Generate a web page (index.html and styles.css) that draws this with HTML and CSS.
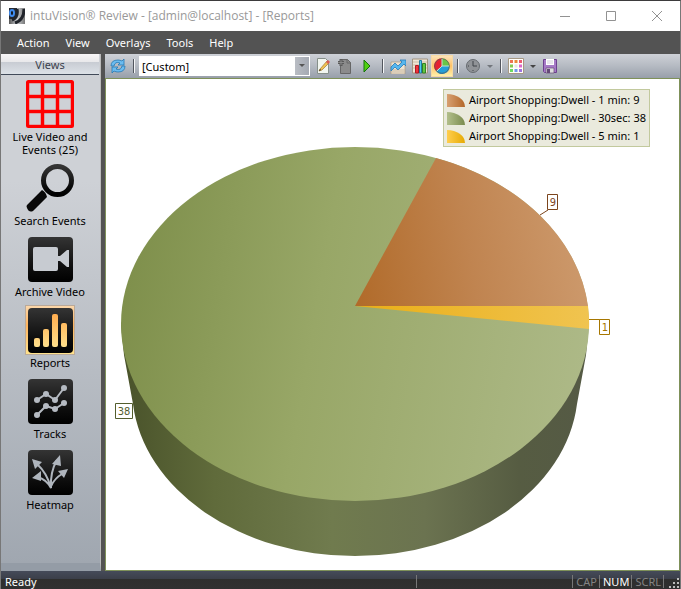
FILE: index.html
```
<!DOCTYPE html>
<html lang="en">
<head>
<meta charset="utf-8">
<title>intuVision Review</title>
<link rel="stylesheet" href="styles.css">
</head>
<body>
<div class="window">
  <header class="titlebar">
    <svg class="app-icon" viewBox="0 0 16 16" aria-hidden="true">
      <defs><linearGradient id="app" x1="0" x2="1"><stop offset="0" stop-color="#555"/><stop offset=".5" stop-color="#c9ccd0"/><stop offset="1" stop-color="#777"/></linearGradient></defs>
      <rect width="16" height="16" fill="url(#app)"/>
      <path d="M0 0h8v5L5 11H0z" fill="#252a33"/>
      <path d="M15 1c0 8-3 12-9 14M8 1c1 5 0 9-5 11" fill="none" stroke="#20242b" stroke-width="3"/>
      <ellipse cx="3" cy="5" rx="2" ry="3" fill="#111" stroke="#3f8cf0" stroke-width="2"/>
    </svg>
    <h1 class="title">intuVision® Review - [admin@localhost] - [Reports]</h1>
    <button class="caption" aria-label="Minimize"><svg viewBox="0 0 12 12"><path d="M1 6.500h10"/></svg></button>
    <button class="caption" aria-label="Maximize"><svg viewBox="0 0 12 12"><path d="M1.500 1.500h9v9h-9z"/></svg></button>
    <button class="caption" aria-label="Close"><svg viewBox="0 0 12 12"><path d="M1 1l10 10M11 1L1 11"/></svg></button>
  </header>
  <nav class="menubar">
    <button>Action</button><button>View</button><button>Overlays</button><button>Tools</button><button>Help</button>
  </nav>
  <div class="body">
    <aside class="sidebar">
      <h2 class="views">Views</h2>
      <svg class="defs" aria-hidden="true">
        <defs>
          <linearGradient id="dark" x2="0" y2="1"><stop offset="0" stop-color="#343434"/><stop offset=".7" stop-color="#0c0c0c"/><stop offset="1" stop-color="#000"/></linearGradient>
          <linearGradient id="amber" gradientUnits="userSpaceOnUse" x1="0" y1="8" x2="0" y2="42"><stop offset="0" stop-color="#ffab4d"/><stop offset="1" stop-color="#ffe08c"/></linearGradient>
        </defs>
      </svg>
      <button class="view">
        <svg viewBox="0 0 50 50"><rect x="2.500" y="2.500" width="45" height="45" rx="1" fill="none" stroke="red" stroke-width="3"/><path d="M17.500 2v46M32.500 2v46M2 17.500h46M2 32.500h46" stroke="red" stroke-width="3"/><path d="M4 4h12v12H4zM19 4h12v12H19zM34 4h12v12H34zM4 19h12v12H4zM19 19h12v12H19zM34 19h12v12H34zM4 34h12v12H4zM19 34h12v12H19zM34 34h12v12H34z" fill="none" stroke="red" stroke-width="1" stroke-opacity=".45"/></svg>
        <span>Live Video and Events (25)</span>
      </button>
      <button class="view">
        <svg viewBox="0 0 50 50"><circle cx="32.500" cy="17.500" r="14" fill="none" stroke="url(#dark)" stroke-width="5"/><path d="M17 27q4 2 5 7L8 48q-4 2-6-3-1-2 0-3z" fill="#090909"/></svg>
        <span>Search Events</span>
      </button>
      <button class="view">
        <svg viewBox="0 0 50 50"><rect x="3" y="3" width="45" height="45" rx="4" fill="url(#dark)"/><path d="M10 13h21q2 0 2 2v7h2l7-6h2v17h-2l-7-6h-2v8q0 2-2 2H10q-2 0-2-2V15q0-2 2-2z" fill="#c7cbd1"/></svg>
        <span>Archive Video</span>
      </button>
      <button class="view selected">
        <svg viewBox="0 0 50 50"><rect x="3" y="3" width="45" height="45" rx="4" fill="url(#dark)"/><g fill="url(#amber)"><rect x="9" y="33" width="6" height="9" rx="2"/><rect x="18" y="24" width="6" height="18" rx="2"/><rect x="27" y="9" width="6" height="33" rx="2"/><rect x="36" y="18" width="6" height="24" rx="2"/></g></svg>
        <span>Reports</span>
      </button>
      <button class="view">
        <svg viewBox="0 0 50 50"><rect x="3" y="3" width="45" height="45" rx="4" fill="url(#dark)"/><g fill="none" stroke="#b5bac2" stroke-width="2"><path d="M12 24l9-6 9 6 9-12M12 39l9-9 9 3 9-6"/></g><g fill="#b5bac2"><circle cx="12" cy="24" r="3"/><circle cx="21" cy="18" r="3"/><circle cx="30" cy="24" r="3"/><circle cx="39" cy="12" r="3"/><circle cx="12" cy="39" r="3"/><circle cx="21" cy="30" r="3"/><circle cx="30" cy="33" r="3"/><circle cx="39" cy="27" r="3"/></g></svg>
        <span>Tracks</span>
      </button>
      <button class="view">
        <svg viewBox="0 0 50 50"><rect x="3" y="3" width="45" height="45" rx="4" fill="url(#dark)"/><path d="M26 41Q22 26 12 17M26 41Q25 25 32 13M26 41q-4-8-13-11M26 39q4-8 11-12" fill="none" stroke="#afb5bd" stroke-width="2"/><path d="M7 12l10 3-7 7zM35 8l-8 9 9 2zM43 22l-10 2 6 7zM7 31l9-7v10zM23 36h5l-2 6z" fill="#afb5bd"/></svg>
        <span>Heatmap</span>
      </button>
    </aside>
    <main class="main">
      <div class="toolbar">
        <button class="tool" aria-label="Refresh"><svg viewBox="0 0 16 16"><path d="M1 8q0-6 7-6 2 0 4 1l2-2v6H8l2-2Q5 3 4 8z" fill="#6cbcf0" stroke="#2478b4" stroke-width=".8"/><path d="M15 8q0 6-7 6-2 0-4-1l-2 2V9h6l-2 2q5 2 6-3z" fill="#6cbcf0" stroke="#2478b4" stroke-width=".8"/></svg></button>
        <span class="sep"></span>
        <span class="combo"><select aria-label="Report"><option>[Custom]</option></select></span>
        <button class="tool" aria-label="Edit"><svg viewBox="0 0 16 16"><path d="M2.500.500h8l3 3v12h-11z" fill="#f2f6f0" stroke="#86908a"/><path d="M5 11l7-8 2 2-7 7-3 1z" fill="#efc252" stroke="#a17a38" stroke-width=".7"/><path d="M11 4l2-2 2 2-2 2z" fill="#d95b55"/><path d="M4 13l1-2 1 1z" fill="#222"/></svg></button>
        <button class="tool" aria-label="Add"><svg viewBox="0 0 16 16"><path d="M3.500 1.500h7l3 3v11h-10z" fill="#8b8b8b" stroke="#666"/><path d="M4 1v7M1 4.500h6" stroke="#5a5a5a" stroke-width="3"/><path d="M4 2v5M1 4.500h6" stroke="#8a8a8a"/><path d="M10 1v4h4" fill="none" stroke="#666"/></svg></button>
        <button class="tool" aria-label="Run"><svg viewBox="0 0 16 16"><path d="M5 2l6 6-6 6z" fill="#4fd010" stroke="#15720b"/></svg></button>
        <span class="sep"></span>
        <button class="tool" aria-label="Line chart"><svg viewBox="0 0 16 16"><path d="M1 4h14v12H1z" fill="#eee2d0" stroke="#a99880" stroke-width=".7"/><path d="M1 12h14M1 14h14" stroke="#c8b9a0"/><path d="M1 9l4-4 3 3 4-4-2-2h6v6l-2-2-6 6-3-3-4 4z" fill="#55b7ef" stroke="#2878b4" stroke-width=".8"/></svg></button>
        <button class="tool" aria-label="Bar chart"><svg viewBox="0 0 16 16"><path d="M.500 1h15v14H.500z" fill="#eee5d5" stroke="#a39580"/><path d="M1 4h14M1 7h14M1 10h14" stroke="#cbbda7"/><path d="M3.500 7.500h3V15h-3z" fill="#ed343b" stroke="#b21823"/><path d="M7.500 2.500h2V15h-2z" fill="#52cceb" stroke="#217da2"/><path d="M10.500 5.500h3V15h-3z" fill="#61c744" stroke="#348123"/></svg></button>
        <button class="tool active" aria-label="Pie chart"><svg viewBox="0 0 16 16"><path d="M8 8V.500A7.500 7.500 0 0 0 2 13z" fill="#e52131"/><path d="M8 8V.500A7.500 7.500 0 0 1 15.500 8z" fill="#6ac447"/><path d="M8 8h7.500A7.500 7.500 0 0 1 2 13z" fill="#249ed8"/><circle cx="8" cy="8" r="7.300" fill="none" stroke="#555" stroke-opacity=".7"/><path d="M8 8V1M8 8h7M8 8l-5 5" stroke="#bce3d0"/></svg></button>
        <span class="sep"></span>
        <button class="tool drop muted" aria-label="Time"><svg viewBox="0 0 16 16"><circle cx="8" cy="8" r="6.500" fill="#909397" stroke="#666b70"/><path d="M8 3v5h4M3 8h1M8 12v1" fill="none" stroke="#3e4348"/></svg></button>
        <span class="sep"></span>
        <button class="tool drop" aria-label="Colors"><svg viewBox="0 0 16 16"><path d="M.500.500h15v15H.500z" fill="#fffefa" stroke="#a69984"/><path fill="#ed7352" d="M2 2h3v3H2z"/><path fill="#e98b38" d="M6.500 2h3v3h-3z"/><path fill="#ec5970" d="M11 2h3v3h-3z"/><path fill="#83c954" d="M2 6.500h3v3H2z"/><path fill="#e5e6e9" d="M6.500 6.500h3v3h-3z"/><path fill="#dc67cc" d="M11 6.500h3v3h-3z"/><path fill="#6ddb62" d="M2 11h3v3H2z"/><path fill="#7099e9" d="M6.500 11h3v3h-3z"/><path fill="#9f72df" d="M11 11h3v3h-3z"/></svg></button>
        <button class="tool" aria-label="Save"><svg viewBox="0 0 16 16"><path d="M1.500 1.500h13v13h-12l-1-1z" fill="#a67ac6" stroke="#6e418f"/><path d="M4 1h8v6H4z" fill="#fff"/><path d="M5 3h6M5 5h6" stroke="#d4d0dc"/><path d="M4 10h8v5H4z" fill="#ddd" stroke="#684b7a" stroke-width=".7"/><path d="M5 11h3v4H5z" fill="#654a77"/></svg></button>
      </div>
      <section class="report">
        <svg class="chart" viewBox="106 79 573 491" role="img" aria-label="Airport Shopping dwell times">
          <defs>
            <linearGradient id="green" gradientUnits="userSpaceOnUse" x1="121" y1="270" x2="589" y2="350"><stop offset="0" stop-color="#7e8f4b"/><stop offset=".42" stop-color="#98a767"/><stop offset="1" stop-color="#adb987"/></linearGradient>
            <linearGradient id="side" gradientUnits="userSpaceOnUse" x1="121" y1="0" x2="589" y2="0"><stop offset="0" stop-color="#49522a"/><stop offset=".2" stop-color="#606b3b"/><stop offset=".45" stop-color="#707b4e"/><stop offset=".65" stop-color="#6b7350"/><stop offset=".85" stop-color="#565c42"/><stop offset="1" stop-color="#555a45"/></linearGradient>
            <linearGradient id="orange" gradientUnits="userSpaceOnUse" x1="355" y1="290" x2="589" y2="250"><stop offset="0" stop-color="#b16b2a"/><stop offset=".5" stop-color="#c08450"/><stop offset="1" stop-color="#cd9a6d"/></linearGradient>
            <linearGradient id="yellow" gradientUnits="userSpaceOnUse" x1="355" y1="0" x2="589" y2="0"><stop offset="0" stop-color="#eaae16"/><stop offset="1" stop-color="#f0c450"/></linearGradient>
          </defs>
          <path d="M121 324L124 355 133 404A223 168 0 0 0 577 404L586 355 589 324z" fill="url(#side)"/>
          <ellipse cx="355" cy="324" rx="234" ry="177" fill="url(#green)"/>
          <path d="M355 306L436 158A234 177 0 0 1 588 306z" fill="url(#orange)"/>
          <path d="M355 306H588A234 177 0 0 1 589 329z" fill="url(#yellow)"/>
          <path d="M540 215l8-5" stroke="#7c451d"/><path d="M547.500 194.500h10v15h-10z" fill="#fff" stroke="#7c451d"/>
          <path d="M589 319.500h11" stroke="#a67600"/><path d="M599.500 319.500h10v15h-10z" fill="#fff" stroke="#a67600"/>
          <path d="M115.500 403.500h17v15h-17z" fill="#fff" stroke="#535d2d"/>
          <g class="point"><text x="553" y="206" fill="#7c451d">9</text><text x="605" y="331" fill="#a67600">1</text><text x="124" y="415" fill="#535d2d">38</text></g>
        </svg>
        <ul class="legend">
          <li><i class="swatch orange"></i>Airport Shopping:Dwell - 1 min: 9</li>
          <li><i class="swatch green"></i>Airport Shopping:Dwell - 30sec: 38</li>
          <li><i class="swatch yellow"></i>Airport Shopping:Dwell - 5 min: 1</li>
        </ul>
      </section>
    </main>
  </div>
  <footer class="status">
    <span class="ready">Ready</span><span class="message"></span>
    <span class="key">CAP</span><span class="key on">NUM</span><span class="key">SCRL</span>
    <svg class="grip" viewBox="0 0 12 12"><path d="M9 1h2v2H9zM5 5h2v2H5zM9 5h2v2H9zM1 9h2v2H1zM5 9h2v2H5zM9 9h2v2H9z" fill="#bbb"/></svg>
  </footer>
</div>
</body>
</html>
```
FILE: styles.css
```
* { box-sizing: border-box; }
body { margin: 0; font: 11px/13px "Noto Sans", "Open Sans", sans-serif; color: #000; }
button { margin: 0; padding: 0; border: 0; background: none; font: inherit; color: inherit; }
svg { display: block; }
.window { min-height: 100vh; display: flex; flex-direction: column; background: #535353; border: solid #777; border-width: 1px 1px 0; border-top-color: #3d3b3d; }
.titlebar { height: 30px; display: flex; align-items: center; background: #fff; }
.app-icon { width: 16px; height: 16px; margin: 0 5px 0 8px; }
.title { flex: 1; margin: 0; font: 12px/16px "Open Sans", "Noto Sans", sans-serif; color: #999; white-space: nowrap; }
.caption { width: 46px; height: 28px; display: grid; place-items: center; }
.caption svg { width: 12px; height: 12px; fill: none; stroke: #929292; }
.menubar { height: 23px; display: flex; align-items: center; gap: 16px; padding-left: 16px; color: #fff; }
.body { flex: 1; display: flex; gap: 4px; }
.sidebar { width: 100px; display: flex; flex-direction: column; align-items: center; background: linear-gradient(#ced1d6, #ced1d6 25%, #a0a7b0 100%); border-right: 1px solid #bbb; border-bottom: 8px solid #949ca6; padding-right: 1px; }
.views { align-self: stretch; height: 21px; margin: 0 0 4px; font-size: 11px; line-height: 21px; font-weight: 400; text-align: center; color: #3b414c; background: linear-gradient(#f8f6f7 0, #e8e8ea 40%, #c8ccd3 41%, #dce1e7 100%); border-bottom: 1px solid #414a59; }
.defs { position: absolute; width: 0; height: 0; }
.view { width: 84px; display: flex; flex-direction: column; align-items: center; gap: 1px; margin-bottom: 7px; }
.view svg { width: 50px; height: 50px; }
.view.selected svg { background: linear-gradient(#fbd9ae, #ffb45e 40%, #ffe48e); outline: 1px solid #b9a99a; outline-offset: -1px; }
.main { flex: 1; min-width: 0; display: flex; flex-direction: column; }
.toolbar { height: 24px; display: flex; align-items: center; padding-left: 2px; background: linear-gradient(#ced1d7, #b5bac2 50%, #989faa); }
.tool { width: 22px; height: 22px; display: flex; align-items: center; justify-content: center; }
.tool svg { width: 16px; height: 16px; }
.tool.active { background: linear-gradient(#fce2b8, #ffc267 50%, #fff0a8); border: 1px solid #f5d9a4; }
.drop { width: 34px; gap: 6px; color: #444; }
.drop.muted { color: #72767c; }
.drop::after { content: ""; border: 3px solid transparent; border-top-color: currentColor; border-bottom: 0; }
.sep { width: 2px; height: 14px; margin: 0 3px 0 4px; background: linear-gradient(90deg, #52565e 50%, #f4f5f7 50%); }
.combo { width: 171px; height: 20px; display: flex; align-items: center; margin: 0 2px 0 1px; padding: 1px; background: #fff; position: relative; }
.combo select { width: 100%; height: 18px; padding: 0 2px; border: 0; appearance: none; background: linear-gradient(90deg, #b9bdc4, #a5aab3) right / 14px 100% no-repeat #fff; font: inherit; color: #000; }
.combo::after { content: ""; position: absolute; right: 5px; top: 8px; border: 3px solid transparent; border-top-color: #555; border-bottom: 0; pointer-events: none; }
.report { flex: 1; position: relative; background: #fff; border: 1px solid #7f9159; }
.chart { width: 100%; height: 100%; }
.point { font: 11px "DejaVu Sans Condensed", "DejaVu Sans", sans-serif; text-anchor: middle; }
.legend { position: absolute; right: 29px; top: 10px; margin: 0; padding: 1px 3px; list-style: none; background: #eaeadd; border: 1px solid #c2c99d; font: 11px/18px "Noto Sans", "Open Sans", sans-serif; white-space: nowrap; }
.legend li { display: flex; align-items: center; gap: 4px; }
.swatch { width: 18px; height: 13px; border-top-right-radius: 100%; }
.swatch.orange { background: linear-gradient(90deg, #d7a071, #b36729); }
.swatch.green { background: linear-gradient(90deg, #b2bf8b, #7a8b4e); }
.swatch.yellow { background: linear-gradient(90deg, #ffce4d, #e6aa04); }
.status { height: 18px; display: flex; align-items: center; padding: 2px 0 0 4px; color: #848484; background: linear-gradient(#454b59, #3b3f49 8px, #2e2e2d 8px, #303030); }
.ready { flex: 414 1 0; color: #fff; }
.message { flex: 156 1 0; height: 13px; border-left: 1px solid #777; }
.key { padding: 0 2px 0 3px; border-left: 1px solid #777; }
.key:last-of-type { border-right: 1px solid #777; }
.key.on { color: #fff; }
.grip { width: 12px; height: 12px; align-self: flex-end; margin-left: 4px; }
```
